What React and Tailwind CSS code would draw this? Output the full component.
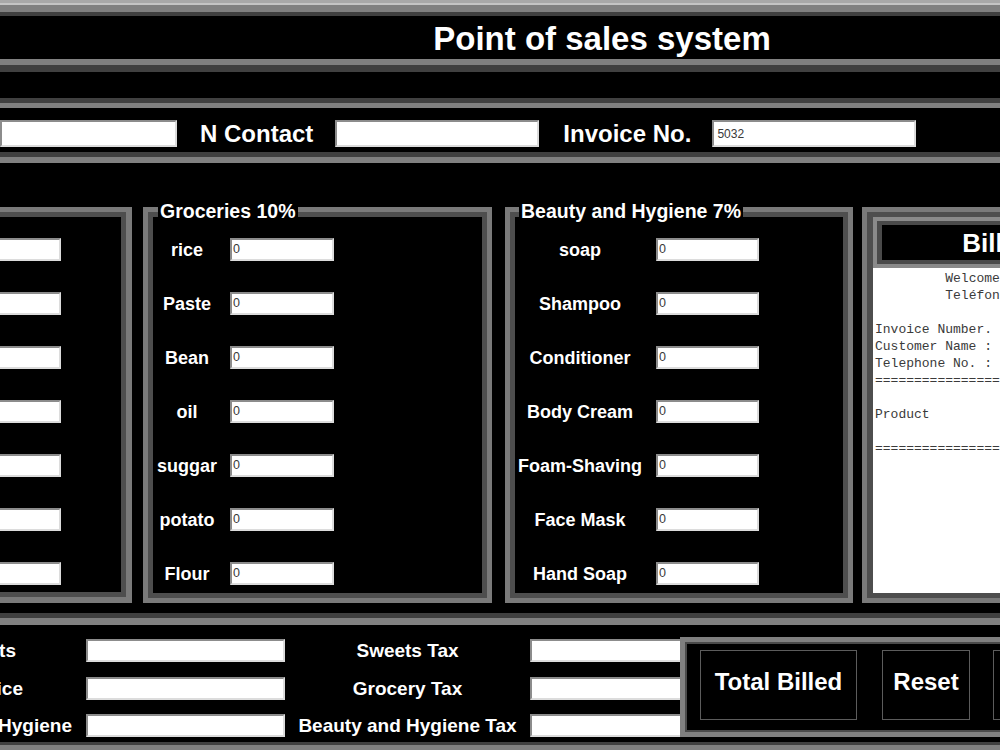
import React from "react";

function Entry({ className = "", value = "" }) {
  return (
    <div
      className={`${className} shrink-0 bg-white border-2 border-t-[#8c8c8c] border-l-[#8c8c8c] border-b-[#dcdcdc] border-r-[#dcdcdc] flex items-center pl-[1px] text-[12.5px] leading-none text-[#3a3a3a] font-['Liberation_Sans',Arial,sans-serif] font-normal`}
    >
      {value}
    </div>
  );
}

const grocery = ["rice", "Paste", "Bean", "oil", "suggar", "potato", "Flour"];
const beauty = ["soap", "Shampoo", "Conditioner", "Body Cream", "Foam-Shaving", "Face Mask", "Hand Soap"];

const billLines = [
  "\t Welcome",
  "\t Teléfono",
  "",
  "Invoice Number.",
  "Customer Name :",
  "Telephone No. :",
  "==================",
  "",
  "Product",
  "",
  "==================",
];

export default function App() {
  return (
    <div className="w-[1000px] h-[750px] overflow-hidden bg-black text-white font-['Liberation_Sans',Arial,sans-serif] font-bold flex flex-col">
      {/* window top edge */}
      <div className="h-[3px] shrink-0 bg-[#a8a8a8]" />

      {/* Title frame (ridge) */}
      <div className="shrink-0 border-t-2 border-t-[#c4c4c4]">
        <div className="border-t-[7px] border-t-[#808080] border-b-[7px] border-b-[#404040]">
          <div className="h-[53px] border-t-[4px] border-t-[#404040] border-b-[6px] border-b-[#808080] flex items-center justify-center pl-[204px] pt-[2px]">
            <span className="text-[33px] leading-none">Point of sales system</span>
          </div>
        </div>
      </div>

      {/* Customer frame (groove) */}
      <div className="shrink-0 mt-[26px] border-t-[5px] border-t-[#404040] border-b-[6px] border-b-[#808080]">
        <div className="h-[54px] border-t-[5px] border-t-[#808080] border-b-[5px] border-b-[#404040] pt-[12px]">
          <div className="flex items-center h-[27px]">
            <Entry className="w-[177px] h-[27px]" />
            <span className="ml-[23px] text-[24px] leading-none">N Contact</span>
            <Entry className="ml-[22px] w-[204px] h-[27px]" />
            <span className="ml-[24px] text-[24px] leading-none">Invoice No.</span>
            <Entry className="ml-[21px] w-[204px] h-[27px] pl-[3px] text-[12px]" value="5032" />
          </div>
        </div>
      </div>

      {/* Product frames */}
      <div className="shrink-0 mt-[44px] h-[396px] flex">
        {/* Sweets (cropped) */}
        <div className="w-[132px] shrink-0 border-t-[5px] border-r-[6px] border-b-[6px] border-[#7a7a7a]">
          <div className="h-full border-t-[5px] border-r-[5px] border-b-[5px] border-[#4e4e4e] pt-[21px] flex flex-col gap-[31px]">
            {grocery.map((_, i) => (
              <Entry key={i} className="w-[61px] h-[23px] border-l-0" />
            ))}
          </div>
        </div>

        {/* Groceries */}
        <div className="relative ml-[11px] w-[349px] shrink-0 border-[5px] border-[#7a7a7a]">
          <div className="h-full border-[5px] border-[#4e4e4e] pt-[21px] flex flex-col gap-[31px]">
            {grocery.map((g) => (
              <div key={g} className="flex items-center h-[23px]">
                <span className="w-[68px] text-center text-[18px] leading-none">{g}</span>
                <Entry className="ml-[9px] w-[104px] h-[23px]" value="0" />
              </div>
            ))}
          </div>
          <span className="absolute left-[10px] top-[-12px] bg-black px-[2px] text-[19.5px] leading-[23px] whitespace-nowrap">Groceries 10%</span>
        </div>

        {/* Beauty and Hygiene */}
        <div className="relative ml-[13px] w-[348px] shrink-0 border-[5px] border-[#7a7a7a]">
          <div className="h-full border-[5px] border-[#4e4e4e] pt-[21px] flex flex-col gap-[31px]">
            {beauty.map((g) => (
              <div key={g} className="flex items-center h-[23px]">
                <span className="w-[130px] text-center text-[18px] leading-none whitespace-nowrap">{g}</span>
                <Entry className="ml-[11px] w-[103px] h-[23px]" value="0" />
              </div>
            ))}
          </div>
          <span className="absolute left-[9px] top-[-12px] bg-black px-[2px] text-[19.5px] leading-[23px] whitespace-nowrap">Beauty and Hygiene 7%</span>
        </div>

        {/* Bill area */}
        <div className="ml-[9px] w-[300px] shrink-0 border-[5px] border-[#7a7a7a]">
          <div className="h-full border-[5px] border-l-[6px] border-[#4e4e4e] flex flex-col">
            <div className="shrink-0 border-[4px] border-[#8a8a8a]">
              <div className="h-[43px] border-[4px] border-l-[5px] border-[#4a4a4a] flex items-center justify-center">
                <span className="text-[26px] leading-none pl-[3px]">Bill Area</span>
              </div>
            </div>
            <div className="flex-1 bg-white pt-[2px] pl-[2px] font-['Liberation_Mono','Courier_New',monospace] font-normal text-[13px] leading-[17px] text-[#3a3a3a] whitespace-pre [tab-size:8] overflow-hidden">
              {billLines.map((l, i) => (
                <div key={i} className="h-[17px]">{l}</div>
              ))}
            </div>
          </div>
        </div>
      </div>

      {/* Bill menu frame */}
      <div className="relative shrink-0 mt-[10px] flex-1 border-t-[5px] border-t-[#404040] border-b-[5px] border-b-[#808080]">
        <div className="h-full border-t-[7px] border-t-[#808080] border-b-[3px] border-b-[#404040] pt-[14px]">
          <div className="grid grid-cols-[86px_199px_245px_199px] auto-rows-[23px] gap-y-[14.5px] items-center">
            <span className="justify-self-end pr-[70px] text-[19px] leading-none whitespace-nowrap">Total Sweets</span>
            <Entry className="w-[199px] h-[23px]" />
            <span className="justify-self-center text-[19px] leading-none whitespace-nowrap">Sweets Tax</span>
            <Entry className="w-[199px] h-[23px]" />

            <span className="justify-self-end pr-[63px] text-[19px] leading-none whitespace-nowrap">Grocery Price</span>
            <Entry className="w-[199px] h-[23px]" />
            <span className="justify-self-center text-[19px] leading-none whitespace-nowrap">Grocery Tax</span>
            <Entry className="w-[199px] h-[23px]" />

            <span className="justify-self-end pr-[14px] text-[19px] leading-none whitespace-nowrap">Beauty and Hygiene</span>
            <Entry className="w-[199px] h-[23px]" />
            <span className="justify-self-center text-[19px] leading-none whitespace-nowrap">Beauty and Hygiene Tax</span>
            <Entry className="w-[199px] h-[23px]" />
          </div>
        </div>

        {/* Button frame (overlaps the tax entries) */}
        <div className="absolute left-[680px] top-[19px] w-[420px] h-[100px] border-[5px] border-[#808080]">
          <div className="h-full border-[2px] border-[#4a4a4a] bg-black pl-[13px] pt-[6px] flex items-start">
            <div className="shrink-0 w-[157px] h-[70px] pb-[6px] border border-[#5c5c5c] flex items-center justify-center text-[24px] leading-none whitespace-nowrap">Total Billed</div>
            <div className="shrink-0 ml-[25px] w-[88px] h-[70px] pb-[6px] border border-[#5c5c5c] flex items-center justify-center text-[24px] leading-none whitespace-nowrap">Reset</div>
            <div className="shrink-0 ml-[23px] w-[80px] h-[70px] pb-[6px] border border-[#5c5c5c] flex items-center justify-center text-[24px] leading-none whitespace-nowrap">Exit</div>
          </div>
        </div>
      </div>
    </div>
  );
}
